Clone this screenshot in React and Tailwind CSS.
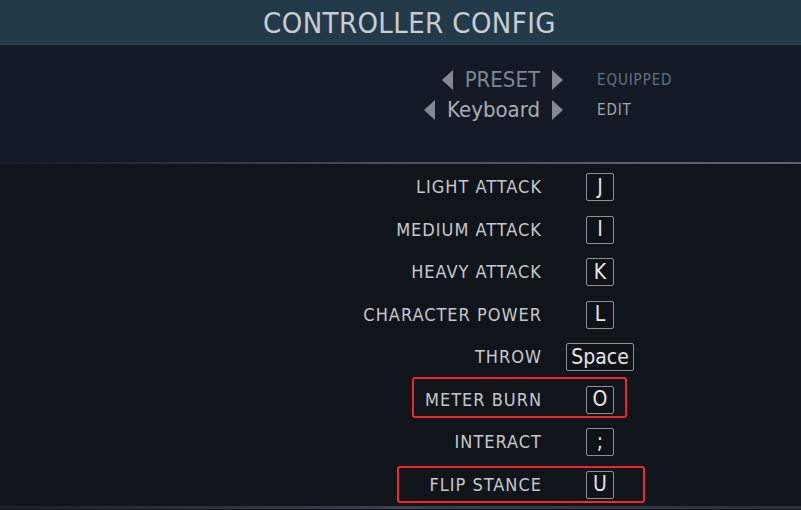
import React from 'react';

const bindings = [
  { label: 'LIGHT ATTACK', key: 'J' },
  { label: 'MEDIUM ATTACK', key: 'I' },
  { label: 'HEAVY ATTACK', key: 'K' },
  { label: 'CHARACTER POWER', key: 'L' },
  { label: 'THROW', key: 'Space' },
  { label: 'METER BURN', key: 'O', mark: 'meter' },
  { label: 'INTERACT', key: ';' },
  { label: 'FLIP STANCE', key: 'U', mark: 'flip' },
];

const Arrow = ({ dir }) => (
  <svg width="11" height="20" viewBox="0 0 11 20" className="shrink-0">
    {dir === 'left' ? (
      <polygon points="11,0 11,20 0,10" fill="#85898f" />
    ) : (
      <polygon points="0,0 0,20 11,10" fill="#85898f" />
    )}
  </svg>
);

const KeyBox = ({ k }) => (
  <div className="h-[28px] min-w-[28px] px-[4px] flex items-center justify-center border-[1.5px] border-[#8b9097] rounded-[2px] bg-[#0f1217] text-[21px] leading-none text-[#e4e5e7]">
    {k}
  </div>
);

export default function App() {
  return (
    <div
      className="w-[801px] h-[510px] overflow-hidden bg-[#10141b] flex flex-col"
      style={{ fontFamily: '"DejaVu Sans Condensed", Roboto, sans-serif' }}
    >
      {/* Header */}
      <div className="h-[45px] shrink-0 bg-[#233a4a] border-b border-[#2b4252] flex items-center justify-center pl-[18px] pt-[3px]">
        <h1 className="text-[29px] leading-none tracking-[0.4px] text-[#c8cdd1]">CONTROLLER CONFIG</h1>
      </div>

      {/* Preset selector */}
      <div className="h-[117px] shrink-0 bg-[#141a25] pt-[20px]">
        <div className="grid grid-cols-[563px_1fr] gap-x-[34px]">
          <div className="h-[30px] flex items-center justify-end gap-[12px]">
            <Arrow dir="left" />
            <span className="text-[22px] leading-none text-[#7b8696]">PRESET</span>
            <Arrow dir="right" />
          </div>
          <div className="h-[30px] flex items-center text-[15px] leading-none tracking-[0.9px] text-[#5f7284]">EQUIPPED</div>
          <div className="h-[30px] flex items-center justify-end gap-[12px]">
            <Arrow dir="left" />
            <span className="text-[22px] leading-none text-[#a9acb1]">Keyboard</span>
            <Arrow dir="right" />
          </div>
          <div className="h-[30px] flex items-center text-[15px] leading-none tracking-[0.9px] text-[#a3a6aa]">EDIT</div>
        </div>
      </div>

      {/* Divider */}
      <div className="h-[2px] shrink-0 bg-gradient-to-r from-[#151a24] via-[#4a5163] to-[#5d6679]" />

      {/* Bindings */}
      <div className="flex-1 pt-[2px]">
        {bindings.map((b) => (
          <div key={b.label} className="relative h-[42.5px] flex items-center">
            <div className="w-[542px] text-right text-[18px] leading-none tracking-[1px] text-[#c6c8cb]">{b.label}</div>
            <div className="w-[116px] flex justify-center">
              <KeyBox k={b.key} />
            </div>
            {b.mark === 'meter' && (
              <div className="absolute left-[412px] w-[215px] top-[-1.5px] h-[41px] border-2 border-[#f2262a] rounded-[3px]" />
            )}
            {b.mark === 'flip' && (
              <div className="absolute left-[397px] w-[248px] top-[2px] h-[37px] border-2 border-[#f2262a] rounded-[3px]" />
            )}
          </div>
        ))}
      </div>

      <div className="h-[3px] shrink-0 mb-[2px] bg-gradient-to-r from-[#1c2029] via-[#3c4250] to-[#2a2f39]" />
    </div>
  );
}
